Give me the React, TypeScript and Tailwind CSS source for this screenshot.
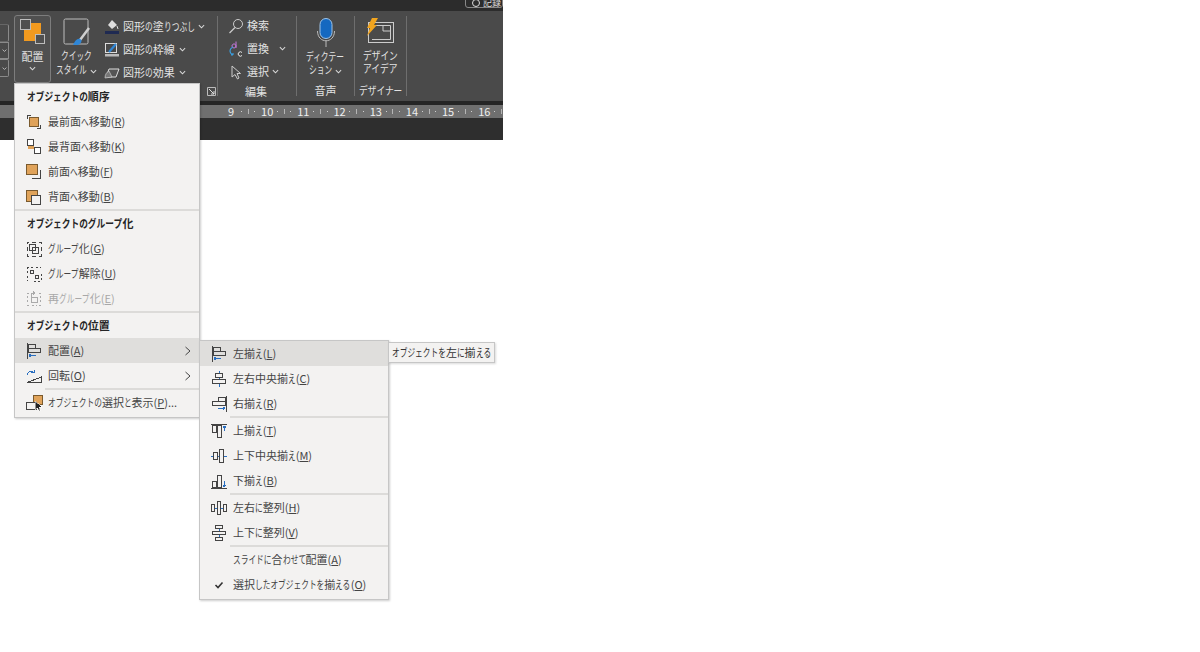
import React from "react";

const font = { fontFamily: '"Noto Sans CJK JP", "Noto Sans", sans-serif' };

/* The reference face has narrow kana: condense kana runs only, keep the text real. */
const J = ({ s, wide, size = 11 }: { s: string; wide?: boolean; size?: number }) => {
  const parts = s.split(/([\u3040-\u30ff]+)/).filter(Boolean);
  return (
    <>
      {parts.map((p, i) =>
        /[\u3040-\u30ff]/.test(p) ? (
          <span
            key={i}
            className={`inline-block whitespace-nowrap origin-left ${wide ? "scale-x-[0.79]" : "scale-x-[0.7]"}`}
            style={{ width: p.length * size * (wide ? 0.79 : 0.7) }}
          >
            {p}
          </span>
        ) : (
          <span key={i}>{p}</span>
        )
      )}
    </>
  );
};

const Chev = ({ c = "#d8d8d8", s = 7 }: { c?: string; s?: number }) => (
  <svg width={s} height={s} viewBox="0 0 8 8" className="inline-block">
    <path d="M1 2.5 L4 5.5 L7 2.5" fill="none" stroke={c} strokeWidth="1.2" />
  </svg>
);

const I = ({ children, w = 20, h = 20 }: { children: React.ReactNode; w?: number; h?: number }) => (
  <svg width={w} height={h} viewBox={`0 0 ${w} ${h}`} fill="none" shapeRendering="crispEdges">
    {children}
  </svg>
);

const O = "#e0a35a";
const B = "#7a5a2e";
const K = "#444";
const BL = "#2a6fc0";

const icons: Record<string, React.ReactNode> = {
  front: (
    <I>
      <path d="M3.5 7V3.5H7M13 16.5H16.5V13" stroke={K} />
      <rect x="5.5" y="5.5" width="9" height="9" fill={O} stroke={B} />
    </I>
  ),
  back: (
    <I>
      <rect x="3.5" y="2.5" width="6" height="6" fill="#fff" stroke={K} />
      <rect x="4" y="9" width="4" height="3" fill={O} />
      <rect x="8" y="9" width="2" height="3" fill={O} />
      <rect x="10.5" y="10.5" width="6" height="6" fill="#fff" stroke={K} />
    </I>
  ),
  forward: (
    <I>
      <path d="M8 16.5H16.5V8" stroke={K} />
      <rect x="2.5" y="2.5" width="11" height="10" fill={O} stroke={B} />
    </I>
  ),
  backward: (
    <I>
      <rect x="2.5" y="3.5" width="11" height="11" fill={O} stroke={B} />
      <rect x="7.5" y="8.5" width="9" height="9" fill="#f3f2f1" stroke={K} />
    </I>
  ),
  group: (
    <I>
      <path d="M3 3h2M3 3v2M15 3h2M17 3v2M3 15v2h2M15 17h2v-2M3 8v4M17 8v4M8 3h4M8 17h4" stroke={K} />
      <rect x="5.5" y="5.5" width="6" height="6" stroke={K} />
      <rect x="8.5" y="8.5" width="6" height="6" stroke={K} />
    </I>
  ),
  ungroup: (
    <I>
      <path d="M3 3h6M3 3v6M17 10v7M10 17h7" stroke={K} strokeDasharray="2 2" />
      <path d="M12 3h5M3 12v5" stroke={K} strokeDasharray="2 2" />
      <rect x="6.5" y="6.5" width="3" height="3" stroke={K} />
      <rect x="11.5" y="11.5" width="3" height="3" stroke={K} />
    </I>
  ),
  regroup: (
    <I>
      <path d="M3 4h2M3 16h2M15 4h2M15 16h2M3 7v6M16 7v6M8 16h5" stroke="#aaa" strokeDasharray="2 2" />
      <rect x="7.5" y="8.5" width="6" height="5" stroke="#aaa" />
      <path d="M7 8V4H11M9 2.5L11 4L9 5.5" stroke="#aaa" />
    </I>
  ),
  alignL: (
    <I>
      <path d="M3.5 2v16" stroke={K} />
      <rect x="4.5" y="3.5" width="7" height="4" stroke={K} />
      <rect x="4.5" y="7.5" width="12" height="4" stroke={K} />
      <path d="M5 14.5h7M5 14.5l2-1.5M5 14.5l2 1.5" stroke={BL} />
    </I>
  ),
  rotate: (
    <I>
      <path d="M3 16.5H17.5V11L3 16.5Z" stroke={K} fill="#f3f2f1" />
      <path d="M3.5 9C3.5 5.5 7 4 10 6.5M10 3.5V6.5H7" stroke={BL} />
    </I>
  ),
  select: (
    <I>
      <rect x="9" y="2" width="9" height="9" fill={O} stroke={B} />
      <rect x="2.5" y="9.5" width="10" height="7" fill="#f3f2f1" stroke={K} />
      <path d="M11 8 L11 17 L13.5 15 L15 18 L16.5 17 L15 14.5 L18 14 Z" fill="#222" stroke="#fff" strokeWidth="0.5" />
    </I>
  ),
  alignC: (
    <I>
      <rect x="6.5" y="4.5" width="7" height="4" stroke={K} />
      <rect x="3.5" y="10.5" width="13" height="4" stroke={K} />
      <path d="M10 2v2M10 9v1M10 15v3" stroke={BL} />
    </I>
  ),
  alignR: (
    <I>
      <path d="M17.5 2v16" stroke={K} />
      <rect x="9.5" y="3.5" width="7" height="4" stroke={K} />
      <rect x="3.5" y="7.5" width="13" height="4" stroke={K} />
      <path d="M9 14.5h7M16 14.5l-2-1.5M16 14.5l-2 1.5" stroke={BL} />
    </I>
  ),
  alignT: (
    <I>
      <path d="M2 3.5h16" stroke={K} />
      <rect x="3.5" y="4.5" width="4" height="7" stroke={K} />
      <rect x="8.5" y="4.5" width="4" height="12" stroke={K} />
      <path d="M15.5 10V5M15.5 5l-1.5 2M15.5 5l1.5 2" stroke={BL} />
    </I>
  ),
  alignM: (
    <I>
      <rect x="4.5" y="6.5" width="4" height="7" stroke={K} />
      <rect x="10.5" y="3.5" width="4" height="13" stroke={K} />
      <path d="M2 10h2M9 10h1M15 10h3" stroke={BL} />
    </I>
  ),
  alignB: (
    <I>
      <path d="M2 17.5h16" stroke={K} />
      <rect x="3.5" y="10.5" width="4" height="6" stroke={K} />
      <rect x="8.5" y="4.5" width="4" height="12" stroke={K} />
      <path d="M15.5 10v6M15.5 16l-1.5-2M15.5 16l1.5-2" stroke={BL} />
    </I>
  ),
  distH: (
    <I>
      <rect x="2.5" y="6.5" width="3" height="7" stroke={K} />
      <rect x="8.5" y="3.5" width="3" height="13" stroke={K} />
      <rect x="14.5" y="6.5" width="3" height="7" stroke={K} />
      <path d="M6 10h2M12 10h2" stroke={BL} />
    </I>
  ),
  distV: (
    <I>
      <rect x="6.5" y="2.5" width="7" height="3" stroke={K} />
      <rect x="3.5" y="8.5" width="13" height="3" stroke={K} />
      <rect x="6.5" y="14.5" width="7" height="3" stroke={K} />
      <path d="M10 6v2M10 12v2" stroke={BL} />
    </I>
  ),
  check: (
    <svg width="20" height="20" viewBox="0 0 20 20" fill="none">
      <path d="M6.5 10 L9 12.5 L13.5 7.5" stroke="#333" strokeWidth="1.6" />
    </svg>
  ),
};

const Row = ({
  icon,
  t,
  k,
  s,
  active,
  disabled,
  arrow,
}: {
  icon?: string;
  t: string;
  k: string;
  s?: string;
  active?: boolean;
  disabled?: boolean;
  arrow?: boolean;
}) => (
  <div
    className={`flex items-center h-[25px] text-[11px] whitespace-nowrap ${active ? "bg-[#dfdedc]" : ""} ${
      disabled ? "text-[#a8a8a8]" : "text-[#444444]"
    }`}
  >
    <div className="w-[33px] shrink-0 flex justify-center pl-[5px]">{icon ? icons[icon] : null}</div>
    <div className="grow">
      <J s={t} />(<span className="underline">{k}</span>){s}
    </div>
    {arrow && (
      <svg width="8" height="10" viewBox="0 0 8 10" fill="none" className="mr-[7px]">
        <path d="M1.5 1 L6 5 L1.5 9" stroke="#444" strokeWidth="1" />
      </svg>
    )}
  </div>
);

const Head = ({ t }: { t: string }) => (
  <div className="h-[25px] flex items-center pl-[12px] text-[11px] font-bold text-[#262626] whitespace-nowrap">
    <span>
      <J s={t} wide />
    </span>
  </div>
);

const Sep = ({ inset }: { inset?: boolean }) => (
  <div className={`h-[2px] bg-[#dcdbd9] ${inset ? "ml-[30px]" : ""}`} />
);

const ShapeItem = ({ icon, t }: { icon: React.ReactNode; t: string }) => (
  <div className="flex items-center h-[23px] gap-[1px] text-[11px] text-[#e2e2e2] whitespace-nowrap">
    <span className="w-[20px] shrink-0 flex justify-center">{icon}</span>
    <span>
      <J s={t} />
    </span>
    <span className="ml-[3px] flex items-center">
      <Chev />
    </span>
  </div>
);

const VSep = () => <div className="w-[1px] h-[80px] mt-[4px] bg-[#6e6e6e] shrink-0" />;

const ticks = [9, 10, 11, 12, 13, 14, 15, 16];

const Tick = () => <span className="w-[1px] h-[1px] bg-[#d0d0d0]" />;

export default function App() {
  return (
    <div className="relative w-[1200px] h-[652px] bg-white overflow-hidden" style={font}>
      <div className="w-[503px] overflow-hidden">
        {/* title strip */}
        <div className="h-[11px] bg-[#2c2c2c] relative">
          <div className="absolute left-[465px] top-[-7px] w-[38px] h-[15px] border border-[#888] rounded-[3px] flex items-end pl-[6px] text-[9px] leading-[8px] text-[#ddd]">
            <span className="w-[8px] h-[8px] rounded-full border border-[#ddd] mr-[3px] shrink-0" />
            <span>記録</span>
          </div>
        </div>
        {/* ribbon */}
        <div className="h-[90px] bg-[#4a4a4a] flex pt-[1px]">
          <div className="w-[9px] shrink-0 flex flex-col pt-[12px]">
            <div className="h-[18px] border border-r-[#8a8a8a] border-[#666] border-l-0 rounded-r-[2px]" />
            <div className="h-[17px] border border-[#8a8a8a] border-l-0 flex items-center justify-end pr-[1px]">
              <Chev s={5} />
            </div>
            <div className="h-[18px] border border-[#8a8a8a] border-l-0 rounded-r-[2px] flex items-center justify-end pr-[1px]">
              <Chev s={5} />
            </div>
          </div>
          {/* arrange */}
          <div className="ml-[5px] mt-[3px] w-[37px] h-[68px] border border-[#7d7d7d] rounded-[3px] bg-[#505050] flex flex-col items-center text-[11px] text-[#e2e2e2] shrink-0">
            <svg width="32" height="32" viewBox="0 0 32 32" className="mt-[1px]" shapeRendering="crispEdges">
              <rect x="7" y="6" width="17" height="18" fill="#f29a1f" />
              <rect x="3.5" y="2.5" width="10" height="10" fill="#505050" stroke="#bdbdbd" />
              <rect x="18.5" y="17.5" width="9" height="9" fill="#505050" stroke="#bdbdbd" />
            </svg>
            <span className="leading-[14px]">配置</span>
            <span className="mt-[2px] flex">
              <Chev />
            </span>
          </div>
          {/* quick style */}
          <div className="ml-[3px] w-[45px] mt-[4px] flex flex-col items-center text-[11px] text-[#e2e2e2] shrink-0 leading-[14px]">
            <svg width="34" height="32" viewBox="0 0 34 32" fill="none">
              <rect x="4" y="3" width="24" height="25" rx="1.5" stroke="#bdbdbd" />
              <path d="M29 12 L20 24" stroke="#cfcfcf" strokeWidth="2.5" />
              <path d="M13 29 C15 25 17 22 20 23 C23 24 21 28 18 29 Z" fill="#2f86d6" />
            </svg>
            <span className="whitespace-nowrap">
              <J s="クイック" />
            </span>
            <span className="whitespace-nowrap">
              <J s="スタイル" /> <Chev />
            </span>
          </div>
          {/* shape items */}
          <div className="ml-[3px] w-[114px] shrink-0 pt-[3px] relative">
            <ShapeItem
              t="図形の塗りつぶし"
              icon={
                <svg width="16" height="16" viewBox="0 0 16 16" fill="none">
                  <path d="M8 1 L13 6 L8 10 L4 6 Z" fill="#ddd" />
                  <path d="M13 7 L14 10" stroke="#ddd" />
                  <rect x="1" y="12" width="14" height="3" fill="#1f2a52" />
                </svg>
              }
            />
            <ShapeItem
              t="図形の枠線"
              icon={
                <svg width="16" height="16" viewBox="0 0 16 16" fill="none">
                  <rect x="1.5" y="1.5" width="11" height="9" stroke="#ddd" />
                  <path d="M5 10 L12 2" stroke="#2f86d6" strokeWidth="2.2" />
                  <rect x="1" y="12" width="14" height="2.5" fill="#bbb" />
                </svg>
              }
            />
            <ShapeItem
              t="図形の効果"
              icon={
                <svg width="16" height="16" viewBox="0 0 16 16" fill="none">
                  <path d="M2 12 L5 4 H15 L12 12 Z" fill="#555" stroke="#ddd" />
                  <path d="M1 13 C1 9 3 7 5 6 L8 12 Z" fill="#777" stroke="#ddd" strokeWidth="0.6" />
                </svg>
              }
            />
            <svg width="9" height="9" viewBox="0 0 9 9" fill="none" className="absolute right-[0px] top-[75px]">
              <path d="M0.5 8.5V0.5H8.5V8.5Z" stroke="#bbb" />
              <path d="M2 2L7 7M7 4V7H4" stroke="#ddd" />
            </svg>
          </div>
          <div className="w-[1px] shrink-0" />
          <VSep />
          {/* edit */}
          <div className="w-[78px] shrink-0 pt-[2px] relative text-[11px] text-[#e2e2e2] whitespace-nowrap">
            <div className="flex items-center h-[23px] pl-[10px] gap-[3px]">
              <svg width="16" height="16" viewBox="0 0 16 16" fill="none">
                <circle cx="10" cy="6" r="4.5" stroke="#ccc" />
                <path d="M7 9.5 L1.5 15" stroke="#ccc" strokeWidth="1.3" />
              </svg>
              <span>検索</span>
            </div>
            <div className="flex items-center h-[23px] pl-[10px] gap-[3px]">
              <svg width="16" height="16" viewBox="0 0 16 16" fill="none">
                <path d="M8 0.5V7M8 5A2 2 0 1 1 8 4.9" stroke="#c678dd" />
                <path d="M14 11.5A2.2 2.2 0 1 0 14 14.5" stroke="#e8e8e8" />
                <path d="M5 6 C1 8 1 12 5 14M5 14L3 14M5 14L5 12" stroke="#3b9fe0" strokeWidth="1.1" />
              </svg>
              <span>置換</span>
              <span className="ml-[7px] flex">
                <Chev />
              </span>
            </div>
            <div className="flex items-center h-[23px] pl-[10px] gap-[3px]">
              <svg width="16" height="16" viewBox="0 0 16 16" fill="none">
                <path d="M4 2 L4 13 L7 10.5 L9.5 15 L11 14 L9 9.5 L12.5 9.5 Z" stroke="#ccc" />
              </svg>
              <span>選択</span>
              <Chev />
            </div>
            <div className="absolute left-0 right-0 top-[71px] text-center pr-[2px]">編集</div>
          </div>
          <VSep />
          {/* voice */}
          <div className="w-[57px] shrink-0 flex flex-col items-center text-[11px] text-[#e2e2e2] leading-[13px] pt-[6px] relative whitespace-nowrap">
            <svg width="20" height="30" viewBox="0 0 20 30" fill="none">
              <rect x="4" y="0.5" width="12" height="20" rx="6" fill="#1468c0" stroke="#9fc4e8" />
              <path d="M1.5 13 C1.5 26 18.5 26 18.5 13" stroke="#bbb" />
              <path d="M10 23V29" stroke="#bbb" />
            </svg>
            <span className="mt-[2px]">
              <J s="ディクテー" />
            </span>
            <span>
              <J s="ション" /> <Chev />
            </span>
            <span className="absolute top-[72px]">音声</span>
          </div>
          <VSep />
          {/* designer */}
          <div className="w-[51px] shrink-0 flex flex-col items-center text-[11px] text-[#e2e2e2] leading-[13px] pt-[6px] relative whitespace-nowrap">
            <svg width="30" height="28" viewBox="0 0 30 28" fill="none">
              <rect x="2.5" y="4.5" width="25" height="20" stroke="#ccc" />
              <path d="M6 7.5H24.5V21.5H6" stroke="#ccc" />
              <path d="M17 7.5V13H24.5" stroke="#ccc" />
              <path d="M6 0 L12 0 L8 7 L11 7 L1 18 L4 10 L1 10 Z" fill="#f2a51f" />
            </svg>
            <span className="mt-[3px]">
              <J s="デザイン" wide />
            </span>
            <span>
              <J s="アイデア" wide />
            </span>
            <span className="absolute top-[72px]">
              <J s="デザイナー" wide />
            </span>
          </div>
          <VSep />
        </div>
        {/* dark gap and ruler */}
        <div className="h-[39px] bg-[#2e2e2e]">
          <div className="h-[4px] bg-[#252525]" />
          <div className="h-[13px] bg-[#6f6f6f] flex items-center text-[11px] leading-[13px] text-[#f0f0f0] pl-[224px]">
            {ticks.map((n) => (
              <span key={n} className="w-[36.2px] shrink-0 flex items-center">
                <span className="w-[14px] shrink-0 text-center">{n}</span>
                <span className="grow flex items-center justify-around pr-[2px]">
                  <Tick />
                  <span className="w-[1px] h-[5px] bg-[#b5b5b5]" />
                  <Tick />
                </span>
              </span>
            ))}
          </div>
        </div>
      </div>

      {/* main menu */}
      <div className="absolute left-[14px] top-[83px] w-[186px] h-[335px] bg-[#f3f2f1] border border-[#c6c6c6] shadow-[1px_1px_2px_rgba(0,0,0,0.2)]">
        <Head t="オブジェクトの順序" />
        <Row icon="front" t="最前面へ移動" k="R" />
        <Row icon="back" t="最背面へ移動" k="K" />
        <Row icon="forward" t="前面へ移動" k="F" />
        <Row icon="backward" t="背面へ移動" k="B" />
        <Sep />
        <Head t="オブジェクトのグループ化" />
        <Row icon="group" t="グループ化" k="G" />
        <Row icon="ungroup" t="グループ解除" k="U" />
        <Row icon="regroup" t="再グループ化" k="E" disabled />
        <Sep />
        <Head t="オブジェクトの位置" />
        <Row icon="alignL" t="配置" k="A" active arrow />
        <Row icon="rotate" t="回転" k="O" arrow />
        <Sep inset />
        <Row icon="select" t="オブジェクトの選択と表示" k="P" s="..." />
      </div>

      {/* submenu */}
      <div className="absolute left-[199px] top-[340px] w-[190px] h-[260px] bg-[#f3f2f1] border border-[#c6c6c6] shadow-[1px_1px_2px_rgba(0,0,0,0.2)]">
        <Row icon="alignL" t="左揃え" k="L" active />
        <Row icon="alignC" t="左右中央揃え" k="C" />
        <Row icon="alignR" t="右揃え" k="R" />
        <Sep inset />
        <Row icon="alignT" t="上揃え" k="T" />
        <Row icon="alignM" t="上下中央揃え" k="M" />
        <Row icon="alignB" t="下揃え" k="B" />
        <Sep inset />
        <Row icon="distH" t="左右に整列" k="H" />
        <Row icon="distV" t="上下に整列" k="V" />
        <Sep inset />
        <Row t="スライドに合わせて配置" k="A" />
        <Row icon="check" t="選択したオブジェクトを揃える" k="O" />
      </div>

      {/* tooltip */}
      <div className="absolute left-[388px] top-[342px] w-[107px] h-[21px] bg-[#f3f2f1] border border-[#c6c6c6] shadow-[1px_1px_2px_rgba(0,0,0,0.15)] flex items-center pl-[3px] text-[11px] text-[#333] whitespace-nowrap">
        <span>
          <J s="オブジェクトを左に揃える" />
        </span>
      </div>
    </div>
  );
}
